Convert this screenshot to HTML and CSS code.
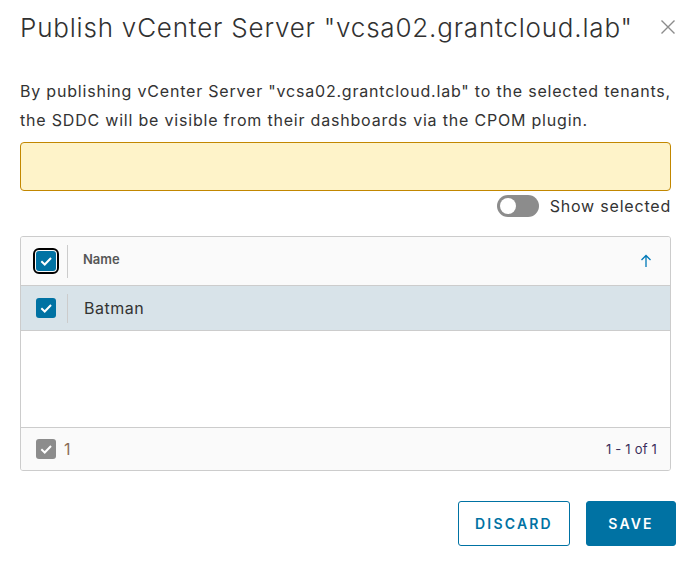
FILE: index.html
```html
<!DOCTYPE html>
<html>
<head>
<meta charset="utf-8">
<link rel="stylesheet" href="styles.css">
</head>
<body>
<div class="modal">
  <div class="modal-header">
    <h3 class="modal-title">Publish vCenter Server "vcsa02.grantcloud.lab"</h3>
    <button class="close" aria-label="Close">
      <svg width="16" height="16" viewBox="0 0 16 16"><path d="M1.5 1.5 L14.5 14.5 M14.5 1.5 L1.5 14.5" stroke="#8c8c8c" stroke-width="1.4" fill="none"/></svg>
    </button>
  </div>
  <p class="desc">By publishing vCenter Server "vcsa02.grantcloud.lab" to the selected tenants, the SDDC will be visible from their dashboards via the CPOM plugin.</p>
  <div class="alert"></div>
  <div class="toggle-row">
    <span class="toggle"><span class="knob"></span></span>
    <span class="toggle-label">Show selected</span>
  </div>
  <div class="grid">
    <div class="grid-head">
      <div class="cell-check"><span class="cb cb-focus"><svg viewBox="0 0 12 12"><path d="M2 6.3 L4.9 9 L10.3 3.4" stroke="#fff" stroke-width="1.7" fill="none"/></svg></span></div>
      <div class="sep"></div>
      <div class="col-name">Name</div>
      <svg class="sort" width="12" height="14" viewBox="0 0 12 14"><path d="M6 13 V1.5 M1.5 6 L6 1.5 L10.5 6" stroke="#0079b8" stroke-width="1.3" fill="none"/></svg>
    </div>
    <div class="grid-row">
      <div class="cell-check"><span class="cb"><svg viewBox="0 0 12 12"><path d="M2 6.3 L4.9 9 L10.3 3.4" stroke="#fff" stroke-width="1.7" fill="none"/></svg></span></div>
      <div class="sep"></div>
      <div class="cell-name">Batman</div>
    </div>
    <div class="grid-body"></div>
    <div class="grid-foot">
      <span class="cb cb-gray"><svg viewBox="0 0 12 12"><path d="M2 6.3 L4.9 9 L10.3 3.4" stroke="#fff" stroke-width="1.7" fill="none"/></svg></span>
      <span class="sel-count">1</span>
      <span class="pager">1 - 1 of 1</span>
    </div>
  </div>
  <div class="footer">
    <button class="btn btn-outline">DISCARD</button>
    <button class="btn btn-primary">SAVE</button>
  </div>
</div>
</body>
</html>
```
FILE: styles.css
```css
* { box-sizing: border-box; }
html, body { margin: 0; padding: 0; background: #fff; }
body { font-family: "Inter", "Open Sans", sans-serif; color: #333; }
.modal { width: 695px; height: 566px; padding: 8px 24px 0 20px; }
.modal-header { display: flex; align-items: center; justify-content: space-between; height: 40px; }
.modal-title { margin: 0; font-size: 26px; font-weight: 300; color: #313131; letter-spacing: 0.8px; line-height: 40px; white-space: nowrap; }
.close { border: 0; background: none; padding: 0; margin-right: -5px; margin-top: -2px; width: 16px; height: 16px; display: flex; }
.desc { margin: 29px 0 0 0; font-size: 16px; line-height: 29px; color: #333; letter-spacing: 0.8px; }
.alert { margin-top: 7px; height: 49px; background: #fef3c9; border: 1px solid #c28700; border-radius: 4px; }
.toggle-row { display: flex; justify-content: flex-end; align-items: center; gap: 11px; height: 30px; }
.toggle { width: 42px; height: 22px; border-radius: 11px; background: #8c8c8c; position: relative; display: block; }
.knob { position: absolute; left: 3px; top: 3px; width: 16px; height: 16px; border-radius: 50%; background: #fff; }
.toggle-label { font-size: 16px; color: #333; letter-spacing: 0.8px; }
.grid { margin-top: 15px; border: 1px solid #ccc; border-radius: 3px; height: 235px; display: flex; flex-direction: column; overflow: hidden; }
.grid-head { display: flex; align-items: center; height: 49px; flex: none; background: #fafafa; border-bottom: 1px solid #ccc; padding-right: 18px; }
.cell-check { width: 46px; display: flex; justify-content: center; padding-left: 4px; }
.sep { width: 1px; height: 33px; background: #ccc; }
.col-name { flex: 1; padding-left: 15px; margin-top: -4px; font-size: 13px; font-weight: 600; color: #565656; }
.sort { margin-top: -1px; }
.grid-row { display: flex; align-items: center; height: 45px; flex: none; background: #d8e3e9; border-bottom: 1px solid #ccc; }
.grid-row .sep { height: 29px; }
.cell-name { padding-left: 16px; font-size: 16px; color: #333; letter-spacing: 0.5px; }
.grid-body { flex: 1; }
.grid-foot { display: flex; align-items: center; height: 43px; flex: none; background: #fafafa; border-top: 1px solid #ccc; padding: 0 13px 0 15px; }
.cb { width: 20px; height: 20px; border-radius: 3px; background: #0072a3; display: inline-flex; align-items: center; justify-content: center; }
.cb svg { width: 14px; height: 14px; }
.cb-focus { outline: 2px solid #000; outline-offset: 1px; border-radius: 3px; }
.cb-gray { background: #8c8c8c; }
.sel-count { margin-left: 8px; font-size: 16px; color: #8a6d55; }
.pager { margin-left: auto; font-size: 13px; color: #3b2f5a; letter-spacing: 0.2px; }
.footer { display: flex; justify-content: flex-end; gap: 16px; margin-top: 30px; margin-right: -5px; }
.btn { height: 45px; border-radius: 3px; font-family: "Inter", sans-serif; font-size: 14px; font-weight: 600; letter-spacing: 2.2px; padding: 0; cursor: pointer; }
.btn-outline { width: 112px; background: #fff; border: 1px solid #0072a3; color: #0072a3; }
.btn-primary { width: 90px; background: #0072a3; border: 1px solid #0072a3; color: #fff; }
```
